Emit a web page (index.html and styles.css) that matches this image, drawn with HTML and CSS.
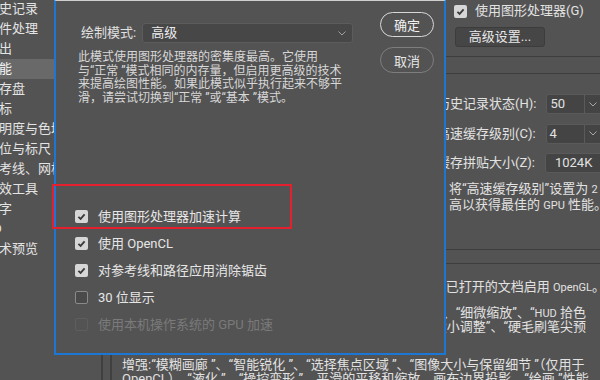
FILE: index.html
```html
<!DOCTYPE html>
<html lang="zh-CN">
<head>
    <meta charset="UTF-8">
    <title>首选项 - 性能</title>
    <link rel="stylesheet" href="styles.css">
</head>
<body>
    <aside class="sidebar">
        <ul class="nav">
            <li>历史记录</li>
            <li>文件处理</li>
            <li>导出</li>
            <li class="active">性能</li>
            <li>暂存盘</li>
            <li>光标</li>
            <li>透明度与色域</li>
            <li>单位与标尺</li>
            <li>参考线、网格和切片</li>
            <li>增效工具</li>
            <li>文字</li>
            <li>3D</li>
            <li>技术预览</li>
        </ul>
    </aside>

    <main class="main">
        <div class="upper">
            <section class="mem-col">
                <h3 class="group-title">内存使用情况</h3>
            </section>

            <section class="gpu-col">
                <label class="gpu-check">
                    <span class="check on"><svg width="13" height="13" viewBox="0 0 13 13"><path d="M3.4 6.8 L5.6 8.9 L9.6 4.3" fill="none" stroke="#3a3a3a" stroke-width="1.8"/></svg></span>
                    使用图形处理器(G)
                </label>
                <button class="btn-adv">高级设置...</button>
                <div class="rule first"></div>
                <div class="rule second"></div>

                <div class="field">
                    <span class="field-label">历史记录状态(H):</span>
                    <div class="num-select">
                        <span class="num-value">50</span>
                        <span class="num-arrow"><svg width="8" height="5" viewBox="0 0 8 5"><path d="M0.5 0.5 L4 4 L7.5 0.5" fill="none" stroke="#a8a8a8" stroke-width="1"/></svg></span>
                    </div>
                </div>
                <div class="field">
                    <span class="field-label">高速缓存级别(C):</span>
                    <div class="num-select">
                        <span class="num-value">4</span>
                        <span class="num-arrow"><svg width="8" height="5" viewBox="0 0 8 5"><path d="M0.5 0.5 L4 4 L7.5 0.5" fill="none" stroke="#a8a8a8" stroke-width="1"/></svg></span>
                    </div>
                </div>
                <div class="field">
                    <span class="field-label">缓存拼贴大小(Z):</span>
                    <div class="num-select tile">
                        <span class="num-value">1024K</span>
                    </div>
                </div>
                <p class="cache-note">将“高速缓存级别”设置为 <span class="en">2</span> 或更<br>高以获得最佳的 <span class="en">GPU</span> 性能。</p>
                <div class="rule third"></div>
            </section>
        </div>

        <section class="info">
            <div class="info-line end bleed">启用图形处理器可激活某些功能和界面增强。为已打开的文档启用 <span class="en">OpenGL</span>。</div>
            <div class="info-para">
                <div class="info-line end inset">功能：“油画”、“细微缩放”、“<span class="en">HUD</span> 拾色</div>
                <div class="info-line end inset">器”、“画布画笔大小调整”、“硬毛刷笔尖预</div>
                <div class="info-line">览”。</div>
            </div>
            <div class="info-para last">
                <div class="info-line">增强:“模糊画廊 ”、“智能锐化 ”、“选择焦点区域 ”、“图像大小与保留细节 ”（仅用于</div>
                <div class="info-line">OpenCL），“液化 ”、“操控变形 ”、平滑的平移和缩放、画布边界投影、“绘画 ”性能、“变形 ”</div>
            </div>
        </section>
    </main>

    <div class="dialog">
        <div class="dialog-main">
            <div class="mode-row">
                <span class="mode-label">绘制模式:</span>
                <div class="mode-select">
                    <span>高级</span>
                    <svg width="8" height="5" viewBox="0 0 8 5"><path d="M0.5 0.5 L4 4 L7.5 0.5" fill="none" stroke="#a0a0a0" stroke-width="1"/></svg>
                </div>
            </div>
            <p class="mode-desc">此模式使用图形处理器的密集度最高。它使用<br>与“正常 ”模式相同的内存量，但启用更高级的技术<br>来提高绘图性能。如果此模式似乎执行起来不够平<br>滑，请尝试切换到“正常 ”或“基本 ”模式。</p>

            <ul class="options">
                <li>
                    <span class="check on"><svg width="13" height="13" viewBox="0 0 13 13"><path d="M3.4 6.8 L5.6 8.9 L9.6 4.3" fill="none" stroke="#3a3a3a" stroke-width="1.8"/></svg></span>
                    使用图形处理器加速计算
                </li>
                <li>
                    <span class="check on"><svg width="13" height="13" viewBox="0 0 13 13"><path d="M3.4 6.8 L5.6 8.9 L9.6 4.3" fill="none" stroke="#3a3a3a" stroke-width="1.8"/></svg></span>
                    使用 OpenCL
                </li>
                <li>
                    <span class="check on"><svg width="13" height="13" viewBox="0 0 13 13"><path d="M3.4 6.8 L5.6 8.9 L9.6 4.3" fill="none" stroke="#3a3a3a" stroke-width="1.8"/></svg></span>
                    对参考线和路径应用消除锯齿
                </li>
                <li>
                    <span class="check off"></span>
                    30 位显示
                </li>
                <li class="disabled">
                    <span class="check off"></span>
                    使用本机操作系统的 GPU 加速
                </li>
            </ul>
        </div>
        <div class="dialog-actions">
            <button class="pill primary">确定</button>
            <button class="pill">取消</button>
        </div>
    </div>

    <div class="highlight-box"></div>
</body>
</html>
```

FILE: styles.css
```css
body {
    margin: 0;
    width: 600px;
    height: 380px;
    overflow: hidden;
    position: relative;
    display: flex;
    background: #535353;
    color: #e2e2e2;
    font-family: Roboto, "Noto Sans CJK SC", sans-serif;
    font-size: 13px;
}
.en {
    font-size: 11px;
}

/* sidebar */
.sidebar {
    width: 101px;
    flex-shrink: 0;
    border-right: 2px solid #404040;
    overflow: hidden;
}
.nav {
    list-style: none;
    margin: -1px 0 0;
    padding: 0;
}
.nav li {
    height: 20px;
    line-height: 20px;
    white-space: nowrap;
    text-indent: -14px;
    color: #e4e4e4;
}
.nav li.active {
    background: #696969;
    color: #f4f4f4;
}

/* main panel behind dialog */
.main {
    flex: 1;
    min-width: 0;
    display: flex;
    flex-direction: column;
}
.upper {
    display: flex;
    height: 263px;
    flex-shrink: 0;
}
.mem-col {
    width: 338px;
    flex-shrink: 0;
}
.group-title {
    margin: 10px 0 0 20px;
    font-size: 13px;
    font-weight: normal;
}
.gpu-col {
    flex: 1;
    min-width: 0;
    padding-top: 1px;
}
.gpu-check {
    display: flex;
    align-items: center;
    height: 20px;
    padding-left: 13px;
    gap: 8px;
    white-space: nowrap;
    line-height: 20px;
}
.btn-adv {
    display: block;
    margin: 6px 0 0 14px;
    width: 90px;
    height: 20px;
    padding: 0;
    background: #464646;
    border: 1px solid #3c3c3c;
    border-radius: 3px;
    color: #e8e8e8;
    font-family: inherit;
    font-size: 13px;
    line-height: 18px;
}
.rule {
    height: 1px;
    background: #3d3d3d;
}
.rule.first { margin-top: 9px; }
.rule.second { margin-top: 16px; }
.rule.third { margin-top: 36px; }

.field {
    display: flex;
    align-items: center;
    height: 20px;
    margin-top: 9.5px;
    white-space: nowrap;
}
.rule.second + .field {
    margin-top: 20px;
}
.field-label {
    width: 105px;
    margin-left: -4px;
    text-align: right;
    line-height: 20px;
}
.num-select {
    display: flex;
    align-items: center;
    width: 70px;
    height: 20px;
    margin-left: 10px;
    flex-shrink: 0;
    box-sizing: border-box;
    background: #444444;
    border: 1px solid #5a5a5a;
    border-radius: 3px;
}
.num-value {
    width: 37px;
    padding-left: 3px;
    box-sizing: border-box;
    line-height: 18px;
}
.num-arrow {
    display: flex;
    align-items: center;
    height: 100%;
    padding-left: 4px;
    border-left: 1px solid #5a5a5a;
}
.num-select.tile .num-value {
    width: auto;
    padding-left: 9px;
}
.cache-note {
    margin: 7.5px 0 0 8px;
    line-height: 15px;
    white-space: nowrap;
}

/* gpu info group */
.info {
    flex: 1;
    margin-left: 7px;
    padding: 16px 0 0 10px;
    border-left: 2px solid #404040;
    border-top: 1px solid #3d3d3d;
    white-space: nowrap;
    overflow: hidden;
}
.info-line {
    height: 14px;
    line-height: 14px;
}
.info-line.end {
    text-align: right;
    padding-right: 1px;
}
.info-line.end.bleed {
    padding-right: 0;
    margin-right: -5px;
}
.info-line.end.inset {
    padding-right: 14px;
}
.info-para {
    margin-top: 12px;
}
.info-para.last {
    margin-top: 10px;
}

/* checkbox */
.check {
    display: inline-flex;
    width: 13px;
    height: 13px;
    flex-shrink: 0;
    box-sizing: border-box;
    border-radius: 2px;
}
.check.on {
    background: #d6d6d6;
}
.check.off {
    background: #4a4a4a;
    border: 1px solid #8a8a8a;
}

/* advanced settings dialog */
.dialog {
    position: absolute;
    left: 54px;
    top: 0;
    width: 392px;
    height: 355px;
    box-sizing: border-box;
    display: flex;
    padding: 11px 10px 0 22px;
    background: #535353;
    border: 2px solid #1b76d4;
    border-top: 1px solid #cfcfcf;
}
.dialog-main {
    flex: 1;
    padding-top: 11px;
}
.mode-row {
    display: flex;
    align-items: center;
    gap: 6px;
    height: 20px;
    margin-left: 3px;
}
.mode-label {
    color: #e0e0e0;
    line-height: 20px;
}
.mode-select {
    display: flex;
    align-items: center;
    justify-content: space-between;
    width: 211px;
    height: 20px;
    box-sizing: border-box;
    padding: 0 6px 0 8px;
    background: #474747;
    border: 1px solid #5c5c5c;
    border-radius: 3px;
    color: #ececec;
    line-height: 18px;
}
.mode-desc {
    margin: 8px 0 0;
    font-size: 12px;
    line-height: 13.5px;
    color: #d8d8d8;
    white-space: nowrap;
}
.options {
    list-style: none;
    margin: 98px 0 0 -3px;
    padding: 0;
}
.options li {
    display: flex;
    align-items: center;
    gap: 10px;
    height: 27px;
    line-height: 27px;
    color: #e6e6e6;
    white-space: nowrap;
}
.options li.disabled {
    color: #7a7a7a;
}
.options li.disabled .check {
    background: transparent;
    border-color: #5e5e5e;
}
.dialog-actions {
    display: flex;
    flex-direction: column;
    gap: 10px;
    width: 54px;
}
.pill {
    height: 25px;
    padding: 0;
    background: transparent;
    border: 1.5px solid #7e7e7e;
    border-radius: 13px;
    color: #e6e6e6;
    font-family: inherit;
    font-size: 13px;
}
.pill + .pill {
    height: 26px;
}
.pill.primary {
    border-color: #d8d8d8;
    color: #f2f2f2;
}

/* red annotation frame */
.highlight-box {
    position: absolute;
    left: 52px;
    top: 184px;
    width: 240px;
    height: 45px;
    box-sizing: border-box;
    border: 2px solid #e5202e;
}
```
